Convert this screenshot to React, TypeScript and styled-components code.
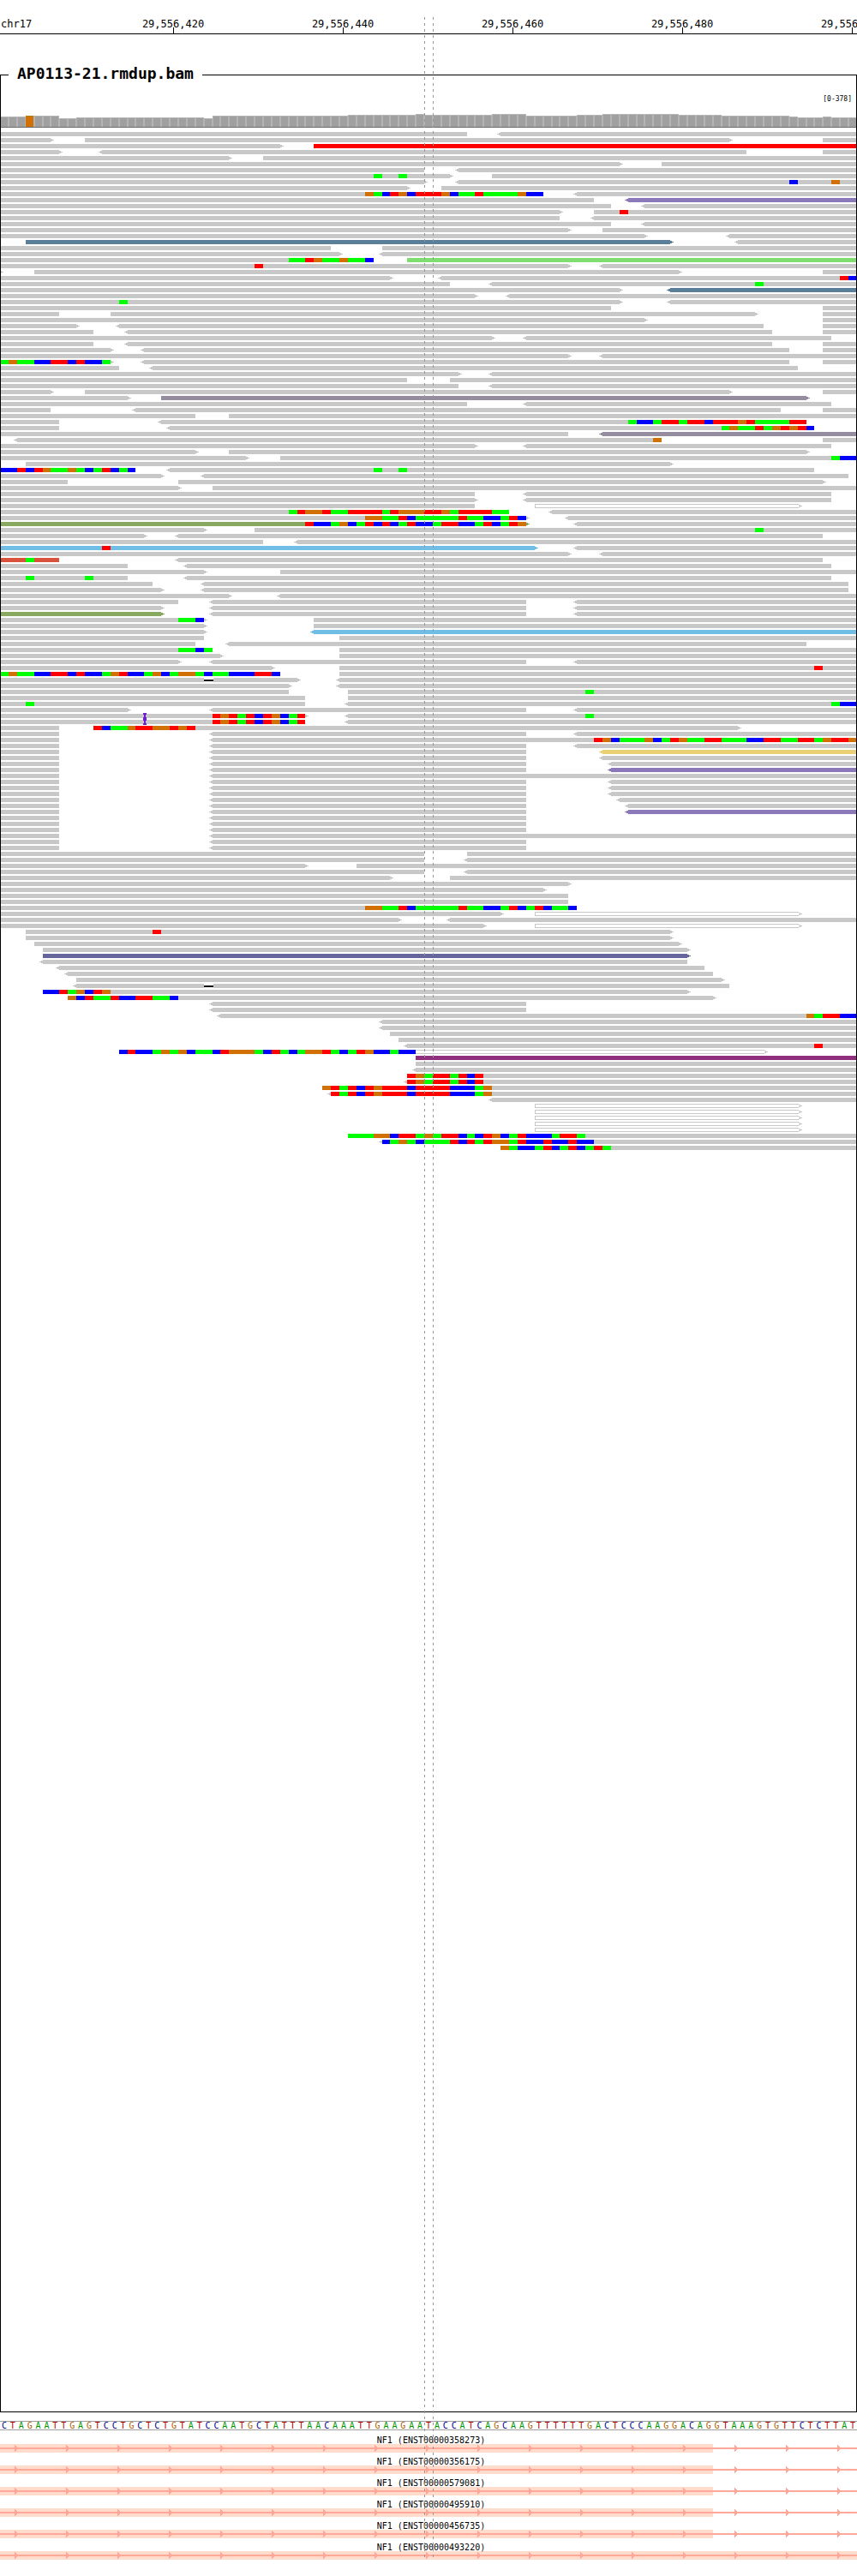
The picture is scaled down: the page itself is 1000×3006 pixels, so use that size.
import React from "react";
import styled, { createGlobalStyle } from "styled-components";

/* ---------- data ---------- */

const BASES_SHOWN = 101;
const BASE_WIDTH = 9.9;
const VIEW_WIDTH = 1000;
const ROW_PITCH = 7;
const ROW_HEIGHT = 5;

const SEQUENCE =
  "CTAGAATTGAGTCCTGCTCTGTATCCAATGCTATTTAACAAATTGAAGAA" +
  "TACCATCAGCAAGTTTTTTGACTCCCAAGGACAGGTAAAGTGTTCTCTTAT";

const RULER_LABELS = ["29,556,420", "29,556,440", "29,556,460", "29,556,480", "29,556,500"];

const TRANSCRIPTS = [
  { id: "ENST00000358273", exonEnd: "83.2%" },
  { id: "ENST00000356175", exonEnd: "83.2%" },
  { id: "ENST00000579081", exonEnd: "83.2%" },
  { id: "ENST00000495910", exonEnd: "83.2%" },
  { id: "ENST00000456735", exonEnd: "83.2%" },
  { id: "ENST00000493220", exonEnd: "100%" },
];

/* [first base, end base, height] */
const COVERAGE: [number, number, number][] = [
  [0, 3, 12], [3, 7, 13], [7, 9, 10], [9, 24, 11], [24, 25, 10], [25, 41, 13],
  [41, 49, 14], [49, 50, 15], [50, 58, 14], [58, 62, 15], [62, 68, 13], [68, 71, 14],
  [71, 80, 15], [80, 85, 14], [85, 93, 13], [93, 94, 12], [94, 97, 11], [97, 98, 12],
  [98, 101, 11],
];

const READ_COLORS: Record<string, string> = {
  grey: "#c8c8c8",
  red: "#ff0000",
  violet: "#8c79b9",
  steel: "#5b7f99",
  lime: "#80dd70",
  mauve: "#968ca0",
  olive: "#87a960",
  sky: "#70bee6",
  brick: "#d9523b",
  yellow: "#e9d074",
  slate: "#66669c",
  plum: "#8f2f7d",
};

const MISMATCH_COLORS: Record<string, string> = {
  A: "#00ff00",
  C: "#0000ff",
  G: "#d17105",
  T: "#ff0000",
};

const LETTER_COLORS: Record<string, string> = {
  A: "#009600",
  C: "#000096",
  G: "#b06000",
  T: "#b40000",
};

/*
 * One string for each packed row. A read is written as
 *   [<]start-end[>][/color][@pos:bases]...[!insertion][^deletion]
 * "<" and ">" mark the strand arrow; "/open" is a read with mapping quality 0.
 */
const T1 = "0-7 <25-62";
const ROWS: string[] = [
  "0-55 <59-101",
  "0-6> 10-86> 97-101",
  "0-33> 37-101/red",
  "0-7> <12-88 97-101",
  "0-27> 31-101",
  "0-73> 78-101",
  "0-50 <54-101",
  "0-53>@44:A@47:A 58-101",
  "0-50> <54-101@93:C@98:G",
  "0-48> 52-101",
  "0-64@43:GACTGCTTTGCAATAAAAGCC <68-101",
  "0-70 <74-101/violet",
  "0-72 <76-101",
  "0-66> 70-101@73:T",
  "0-66 <70-101",
  "0-72 <76-101",
  "0-67> 71-101",
  "0-76> <86-101",
  "3-79>/steel <87-101",
  "0-39 45-101",
  "0-40> <45-101",
  "0-44@34:AATGAAGAAC 48-101/lime",
  "0-67>@30:T <71-101",
  "0-0> 4-80> 97-101",
  "0-46> <52-101@99:TC",
  "0-53 <58-101@89:A",
  "0-73> <79-101/steel",
  "0-56> <60-101",
  "0-73>@14:A <79-101",
  "0-72 97-101",
  "0-7 13-89> 97-101",
  "0-76> 97-101",
  "0-9> <14-90 97-101",
  "0-11 <15-91 97-101",
  "0-58> <62-98",
  "0-11 <15-91 97-101",
  "0-13> <17-93 97-101",
  "0-67> <71-101",
  "0-13>@0:AGAACCTTCTCCA <17-93 97-101",
  "0-14 <18-94",
  "0-54> <58-101",
  "0-48 53-101",
  "0-54 <58-101",
  "0-6> 10-86> 97-101",
  "0-15> 19-95>/mauve",
  "0-55 <62-98",
  "0-6 <16-92 97-101",
  "0-23 27-101",
  "0-7 <19-95@74:ACCATTATTCTTTGTAAAATT",
  "0-7 <20-96@85:AGAATAGTGTC",
  "0-67 <71-101/mauve",
  "<2-78@77:G 97-101",
  "0-56> <62-98",
  "0-23> 27-95>",
  "0-29> 33-101@98:ACC",
  "3-79>",
  "0-16@0:CCTCTGAAGACATCAC <20-96@44:A@47:A",
  "0-19> <24-100",
  "0-8 21-97>",
  "0-21> 25-101",
  "0-56 <62-98",
  "0-56> <62-98",
  "0-56 63-94>/open",
  "0-60@34:ATGGTAATTTTATGGGTTGATTTTAA <65-101",
  "0-62>@43:GGAATCAAAAATAACCATC <67-101",
  "0-62>/olive@36:TCCAGCATCTCATCCATTCCATCATG <68-101",
  "0-24> 30-101@89:A",
  "0-17> <21-97",
  "0-31 <35-101",
  "0-63>/sky@12:T <68-101",
  "0-67> <71-101",
  "0-7/brick@3:A <21-97",
  "0-15 <22-98",
  "0-24> 33-101",
  "0-15@3:A@10:A <22-98",
  "0-18 <24-100",
  "0-19> <24-100",
  "0-27> <33-101",
  "0-21 <25-62 <68-101",
  "0-19> <25-62 <68-101",
  "0-19>/olive <25-62 <68-101",
  "0-24>@21:AAC 37-101",
  "0-24> 37-101",
  "0-24> <37-101/sky",
  "0-24 40-101",
  "0-23 <27-95",
  "0-25@21:AACA 40-101",
  "0-26> 40-101",
  "0-21> <25-62 <68-101",
  "0-32> 40-101@96:T",
  "0-33@0:AGAACCTTCTCCAGTCCAGCAGGACAACCCTTC 40-101",
  "0-35>^24 <40-101",
  "0-34> <40-101",
  "0-34 41-101@69:A",
  "0-36 41-101",
  "0-36@3:A <41-101@98:ACC",
  "0-15> <25-62 <68-101",
  "0-36>@25:TGTATCTGCAT!17 <41-101@69:A",
  "0-36@25:TGTATCTGCAT!17 <41-101",
  "0-7 11-87>@11:TCAAGTTGGTGT",
  T1 + " <68-101",
  "0-7 <25-101@70:TGCAAAGCATGAATTAAACCTTAATTAGTTG",
  T1 + " <68-101",
  T1 + " <71-101/yellow",
  T1 + " <71-101",
  T1 + " <72-101",
  T1 + " <72-101/violet",
  "0-7 <25-101",
  T1 + " <72-101",
  T1 + " <72-101",
  T1 + " <72-101",
  T1 + " <73-101",
  T1 + " <74-101",
  T1 + " <74-101/violet",
  T1,
  T1,
  T1,
  "0-7 <25-101",
  T1,
  T1,
  "0-50 55-101",
  "0-50 <55-101",
  "0-36> 42-101",
  "0-50 <55-101",
  "0-46> 53-101",
  "0-67>",
  "0-64>",
  "0-67",
  "0-67",
  "0-68@43:GGAATCAAAAATAACCATCATCAAC",
  "0-59> 63-94>/open",
  "0-47> <53-101",
  "0-57> 63-94>/open",
  "3-79>@18:T",
  "3-79>",
  "4-80>",
  "5-81>",
  "5-81>/slate",
  "<5-81",
  "<7-83",
  "<8-84",
  "9-85>",
  "<9-86^24",
  "5-81>@5:CCTAGCTG",
  "8-84>@8:GCTAATCCTTAAC",
  "<25-62",
  "<25-62",
  "<26-101@95:GATTCC",
  "<45-101",
  "<45-101",
  "46-101",
  "47-101",
  "<48-101@96:T",
  "14-90>/open@14:CTCCAGAGCAACTGGGACTACAGGTACATGCCACC",
  "49-101/plum",
  "49-101",
  "<49-101",
  "48-101@48:TGATTATCT",
  "<48-101@48:TGATTATCT",
  "38-101@38:GTATCTGTTTCTTTTCCCAG",
  "<39-101@39:TATCTGTTTCTTTTCCCAG",
  "<58-101",
  "63-94>/open",
  "63-94>/open",
  "63-94>/open",
  "63-94>/open",
  "63-94>/open",
  "41-101@41:AAAGGCTTAGATTCACTGCATCCCATTA",
  "<45-101@45:CAGACAAATCTATGGATCCTCCTCC",
  "59-101@59:GACCATCATCATA",
];

/* ---------- styles ---------- */

const GlobalStyle = createGlobalStyle`
  body {
    margin: 0;
    background: #fff;
    color: #000;
    font-family: "DejaVu Sans Mono", monospace;
  }
`;

const Page = styled.main`
  position: relative;
  display: flex;
  flex-direction: column;
  padding-bottom: 19px;
  overflow: hidden;
`;

const Ruler = styled.header`
  display: grid;
  grid-template-columns: 103px repeat(5, 19.8%);
  align-items: end;
  height: 39px;
  overflow: hidden;
  border-bottom: 1px solid #000;
  font-size: 12px;
  line-height: 12px;
`;

const Chromosome = styled.span`
  padding: 0 0 5px 1px;
`;

const Tick = styled.span`
  display: flex;
  flex-direction: column;
  align-items: center;

  &::after {
    content: "";
    width: 1px;
    height: 7px;
    margin-top: -2px;
    background: #000;
  }
`;

const Track = styled.fieldset`
  min-width: 0;
  margin: 36px 0 0;
  padding: 0;
  border: 1px solid #000;
`;

const TrackName = styled.legend`
  margin-left: 9px;
  padding: 0 10px 2px;
  font-size: 18px;
  font-weight: bold;
  line-height: 20px;
`;

const ScaleRange = styled.div`
  padding: 12px 5px 0 0;
  font-size: 8px;
  line-height: 12px;
  text-align: right;
`;

const Plot = styled.svg<{ $gap: number }>`
  display: block;
  width: 100%;
  margin-top: ${(p) => p.$gap}px;
  shape-rendering: crispEdges;
`;

const Pileup = styled.div`
  min-height: 2660px;
`;

const Reference = styled.div`
  display: grid;
  grid-template-columns: repeat(${BASES_SHOWN}, 1fr);
  margin-top: 10px;
  border: solid #a0a0a0;
  border-width: 1px 0;
  font-size: 10px;
  line-height: 9px;
  text-align: center;
`;

const Letter = styled.span<{ $base: string }>`
  color: ${(p) => LETTER_COLORS[p.$base]};
`;

const Genes = styled.section`
  display: flex;
  flex-direction: column;
  padding-top: 1px;
`;

const Gene = styled.div`
  padding-top: 3px;
`;

const GeneName = styled.div`
  position: relative;
  margin-bottom: -3px;
  padding-left: 6px;
  font-size: 10px;
  line-height: 15px;
  text-align: center;
`;

const Focus = styled.div`
  position: absolute;
  top: 20px;
  bottom: 22px;
  left: 49.5%;
  width: calc(1% + 1px);
  pointer-events: none;
  background-image: repeating-linear-gradient(#969696 0 3px, transparent 3px 7px),
    repeating-linear-gradient(#969696 0 3px, transparent 3px 7px);
  background-position: left top, right top;
  background-repeat: no-repeat;
  background-size: 1px 100%;
`;

/* ---------- drawing ---------- */

const toX = (base: number) => Math.round(base * BASE_WIDTH);

function Bases({ at, bases, y }: { at: number; bases: string; y: number }) {
  return (
    <>
      {bases.split("").map((b, i) => (
        <rect
          key={i}
          x={toX(at + i)}
          y={y}
          width={toX(at + i + 1) - toX(at + i)}
          height={ROW_HEIGHT}
          fill={MISMATCH_COLORS[b]}
        />
      ))}
    </>
  );
}

function Read({ spec, y }: { spec: string; y: number }) {
  const m = spec.match(/^(<?)(\d+)-(\d+)(>?)(?:\/(\w+))?/);
  if (!m) return null;
  const left = toX(Number(m[2]));
  const right = toX(Number(m[3]));
  const color = READ_COLORS[m[5]] || READ_COLORS.grey;
  const mismatches = [...spec.matchAll(/@(\d+):([ACGT]+)/g)];
  const insertion = spec.match(/!(\d+)/);
  const deletion = spec.match(/\^(\d+)/);

  return (
    <g>
      {m[5] === "open" ? (
        <path
          d={`M${left + 0.5} ${y + 0.5}H${right}L${right + 3.5} ${y + 2.5}L${right} ${y + 4.5}H${left + 0.5}Z`}
          fill="none"
          stroke={color}
        />
      ) : (
        <>
          <rect x={left} y={y} width={right - left} height={ROW_HEIGHT} fill={color} />
          {m[1] && <path d={`M${left} ${y + 1}h-2v1h-2v1h2v1h2z`} fill={color} />}
          {m[4] && <path d={`M${right} ${y + 1}h2v1h2v1h-2v1h-2z`} fill={color} />}
        </>
      )}
      {mismatches.map((x) => (
        <Bases key={x[1]} at={Number(x[1])} bases={x[2]} y={y} />
      ))}
      {deletion && (
        <>
          <rect x={toX(Number(deletion[1]))} y={y} width={11} height={ROW_HEIGHT} fill="#fff" />
          <rect x={toX(Number(deletion[1]))} y={y + 2} width={11} height={2} fill="#000" />
        </>
      )}
      {insertion && (
        <path
          d={`M${toX(Number(insertion[1])) - 1} ${y - 1}h4v2h-1v3h1v2h-4v-2h1v-3h-1z`}
          fill="#6f1bd6"
        />
      )}
    </g>
  );
}

function Coverage() {
  const bars = COVERAGE.flatMap(([from, to, h]) =>
    Array.from({ length: to - from }, (_, i) => ({ base: from + i, h }))
  );
  return (
    <Plot $gap={11} height={16} viewBox={`1 0 ${VIEW_WIDTH - 2} 16`} preserveAspectRatio="none">
      {bars.map(({ base, h }) => {
        const x = toX(base);
        const w = toX(base + 1) - x;
        return (
          <g key={base}>
            <rect x={x} y={15 - h} width={w} height={h} fill="#b4b4b4" />
            <rect x={x + 1} y={16 - h} width={w - 2} height={h - 1} fill="#a0a0a0" />
          </g>
        );
      })}
      <rect x={30} y={2} width={9} height={13} fill="#d17105" />
      <rect x={34} y={2} width={1} height={1} fill="#00c800" />
      <rect x={0} y={15} width={VIEW_WIDTH} height={1} fill="#6e6e6e" />
    </Plot>
  );
}

function Reads() {
  const height = ROWS.length * ROW_PITCH;
  return (
    <Plot $gap={5} height={height} viewBox={`1 0 ${VIEW_WIDTH - 2} ${height}`} preserveAspectRatio="none">
      {ROWS.map((row, k) => (
        <g key={k}>
          {row.split(" ").map((spec) => (
            <Read key={spec} spec={spec} y={k * ROW_PITCH} />
          ))}
        </g>
      ))}
    </Plot>
  );
}

function Transcript({ id, exonEnd }: { id: string; exonEnd: string }) {
  return (
    <Gene>
      <GeneName>NF1 ({id})</GeneName>
      <Plot $gap={0} height={10}>
        <defs>
          <pattern id={`arrow-${id}`} x="17" width="60" height="10" patternUnits="userSpaceOnUse">
            <path d="M0 1h1v1h1v1h1v4h-1v1h-1v1h-1z" fill="#ffa899" />
          </pattern>
        </defs>
        <rect width={exonEnd} height="10" fill="#ffdccc" />
        <rect y="4" width="100%" height="2" fill="#ffa899" />
        <rect width="100%" height="10" fill={`url(#arrow-${id})`} />
      </Plot>
    </Gene>
  );
}

export default function App() {
  return (
    <>
      <GlobalStyle />
      <Page>
        <Ruler>
          <Chromosome>chr17</Chromosome>
          {RULER_LABELS.map((label) => (
            <Tick key={label}>{label}</Tick>
          ))}
        </Ruler>
        <Track>
          <TrackName>AP0113-21.rmdup.bam</TrackName>
          <ScaleRange>[0-378]</ScaleRange>
          <Coverage />
          <Pileup>
            <Reads />
          </Pileup>
        </Track>
        <Reference>
          {SEQUENCE.split("").map((base, i) => (
            <Letter key={i} $base={base}>
              {base}
            </Letter>
          ))}
        </Reference>
        <Genes>
          {TRANSCRIPTS.map((t) => (
            <Transcript key={t.id} {...t} />
          ))}
        </Genes>
        <Focus />
      </Page>
    </>
  );
}
